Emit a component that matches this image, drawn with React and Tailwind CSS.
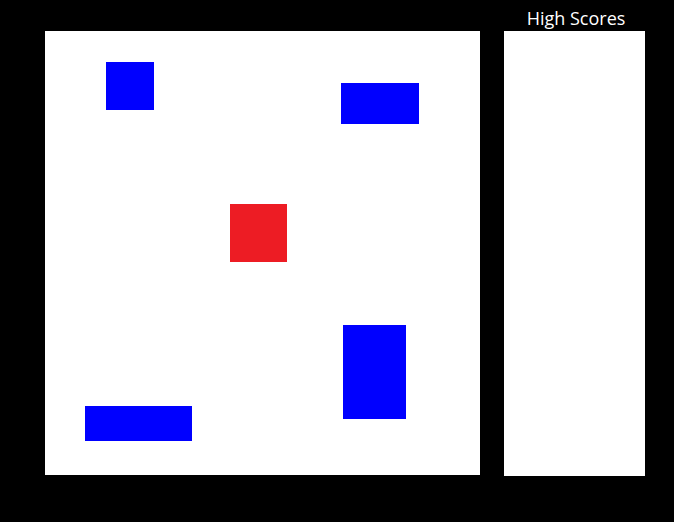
import React from 'react';

const blocks = [
  { id: 1, left: 61, top: 31, w: 48, h: 48, color: 'bg-[#0000ff]' },
  { id: 2, left: 296, top: 52, w: 78, h: 41, color: 'bg-[#0000ff]' },
  { id: 3, left: 185, top: 173, w: 57, h: 58, color: 'bg-[#ed1c24]' },
  { id: 4, left: 298, top: 294, w: 63, h: 94, color: 'bg-[#0000ff]' },
  { id: 5, left: 40, top: 375, w: 107, h: 35, color: 'bg-[#0000ff]' },
];

export default function App() {
  return (
    <div
      className="w-[674px] h-[522px] bg-black flex gap-[24px] pl-[45px]"
      style={{ fontFamily: '"Open Sans", sans-serif' }}
    >
      <div className="flex flex-col">
        <div className="h-[31px]" />
        <div className="relative w-[435px] h-[444px] bg-white">
          {blocks.map(b => (
            <div
              key={b.id}
              className={`absolute ${b.color}`}
              style={{ left: b.left, top: b.top, width: b.w, height: b.h }}
            />
          ))}
        </div>
      </div>
      <div className="flex flex-col w-[141px]">
        <div className="h-[31px] pt-[5px] pl-[3px] text-center text-white text-[18px] leading-[26px]">
          High Scores
        </div>
        <div className="h-[445px] bg-white" />
      </div>
    </div>
  );
}
